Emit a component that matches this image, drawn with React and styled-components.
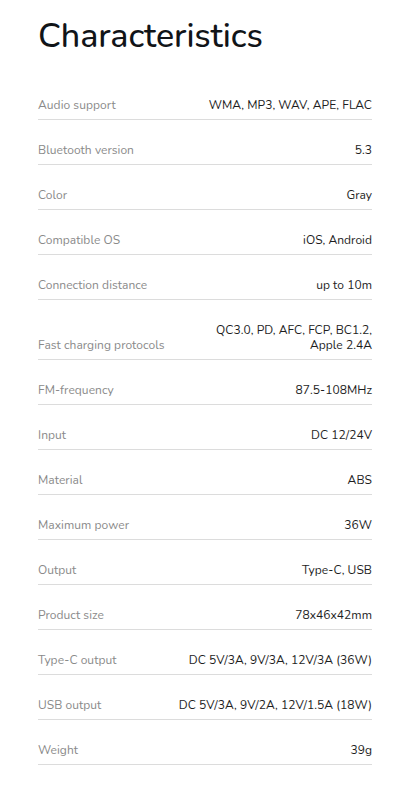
import React from "react";
import styled, { createGlobalStyle } from "styled-components";

const Global = createGlobalStyle`
  html, body { margin: 0; padding: 0; background: #fff; }
  body { font-family: "Nunito", "Lato", "Noto Sans", sans-serif; }
`;

const Page = styled.section`
  padding: 14px 44px 0 38px;
`;

const Title = styled.h1`
  margin: 0 0 17px 0;
  font-size: 34px;
  line-height: 44px;
  font-weight: 500;
  color: #111418;
  letter-spacing: -0.1px;
`;

const List = styled.dl`
  margin: 0;
`;

const Row = styled.div`
  display: flex;
  justify-content: space-between;
  align-items: flex-end;
  gap: 16px;
  padding: 23px 0 6px;
  border-bottom: 1px solid #dcdcdc;
  font-size: 12px;
  line-height: 15px;
  letter-spacing: 0.05px;
`;

const Label = styled.dt`
  margin: 0;
  color: #8a8a8a;
  white-space: nowrap;
`;

const Value = styled.dd`
  margin: 0;
  color: #1e1e1e;
  text-align: right;
`;

const specs = [
  ["Audio support", "WMA, MP3, WAV, APE, FLAC"],
  ["Bluetooth version", "5.3"],
  ["Color", "Gray"],
  ["Compatible OS", "iOS, Android"],
  ["Connection distance", "up to 10m"],
  ["Fast charging protocols", ["QC3.0, PD, AFC, FCP, BC1.2,", "Apple 2.4A"]],
  ["FM-frequency", "87.5-108MHz"],
  ["Input", "DC 12/24V"],
  ["Material", "ABS"],
  ["Maximum power", "36W"],
  ["Output", "Type-C, USB"],
  ["Product size", "78x46x42mm"],
  ["Type-C output", "DC 5V/3A, 9V/3A, 12V/3A (36W)"],
  ["USB output", "DC 5V/3A, 9V/2A, 12V/1.5A (18W)"],
  ["Weight", "39g"],
];

export default function App() {
  return (
    <>
      <Global />
      <Page>
        <Title>Characteristics</Title>
        <List>
          {specs.map(([k, v]) => (
            <Row key={k}>
              <Label>{k}</Label>
              <Value>
                {Array.isArray(v)
                  ? v.map((line, i) => (
                      <React.Fragment key={i}>
                        {line}
                        {i < v.length - 1 && <br />}
                      </React.Fragment>
                    ))
                  : v}
              </Value>
            </Row>
          ))}
        </List>
      </Page>
    </>
  );
}
